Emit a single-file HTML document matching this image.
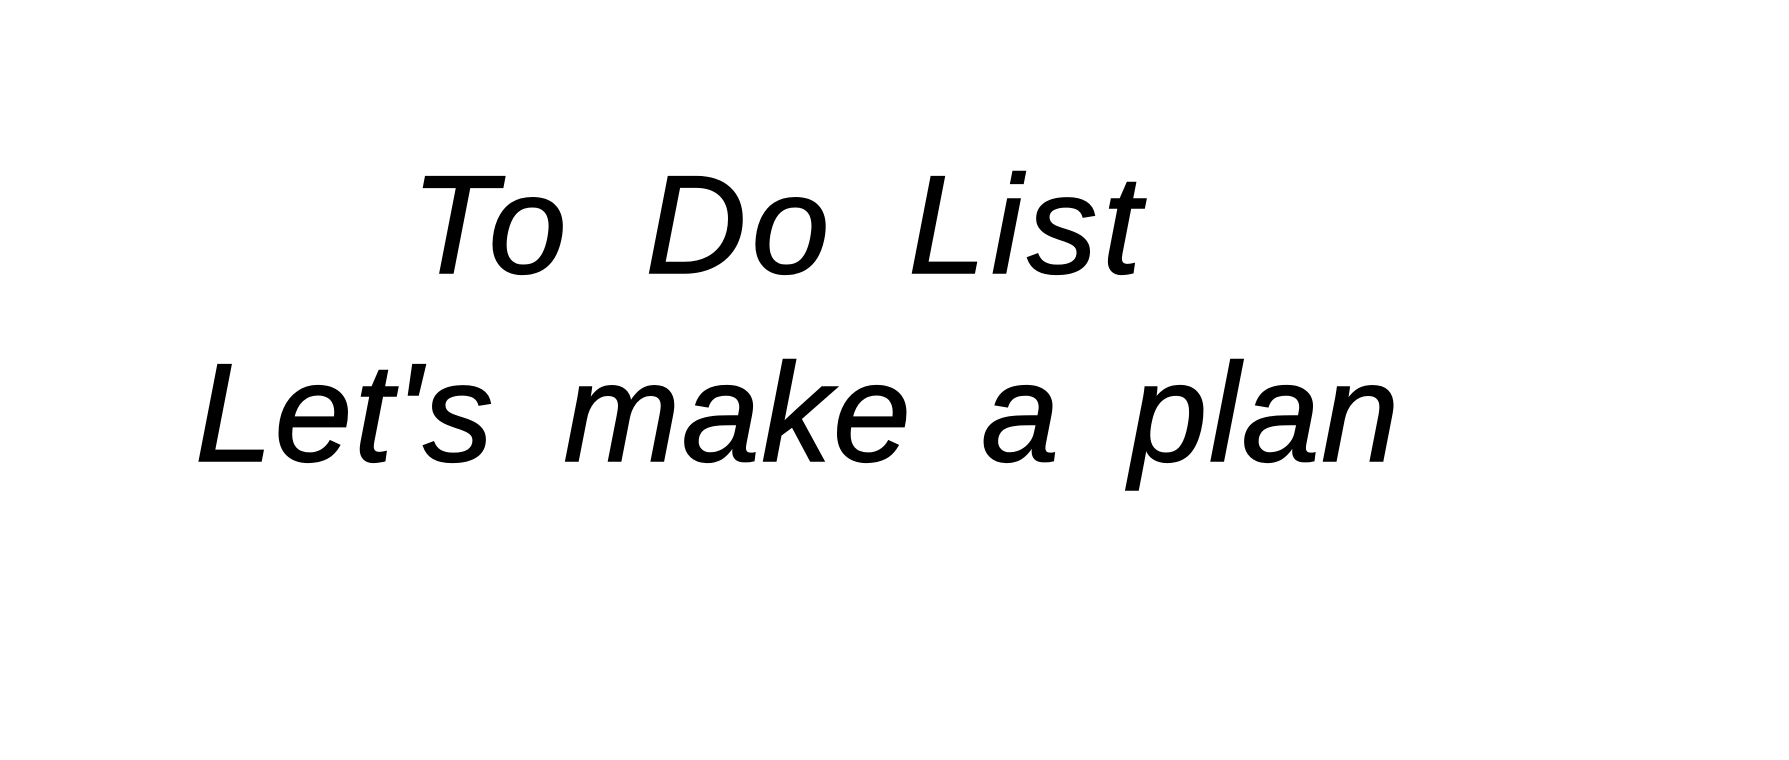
<!DOCTYPE html>
<html><head><meta charset="utf-8"><style>
html,body{margin:0;padding:0;background:#fff;width:1789px;height:760px;overflow:hidden;position:relative}
.t{position:absolute;font-family:"Liberation Sans",sans-serif;font-style:italic;font-size:140px;line-height:140px;color:#000;white-space:nowrap;-webkit-text-stroke:1.5px #000}
#a{left:411px;top:155px;letter-spacing:5px;word-spacing:30px}
#b{left:195px;top:343px;letter-spacing:1.7px;word-spacing:28px}
</style></head><body>
<div class="t" id="a">To Do List</div>
<div class="t" id="b">Let's make a plan</div>
</body></html>
